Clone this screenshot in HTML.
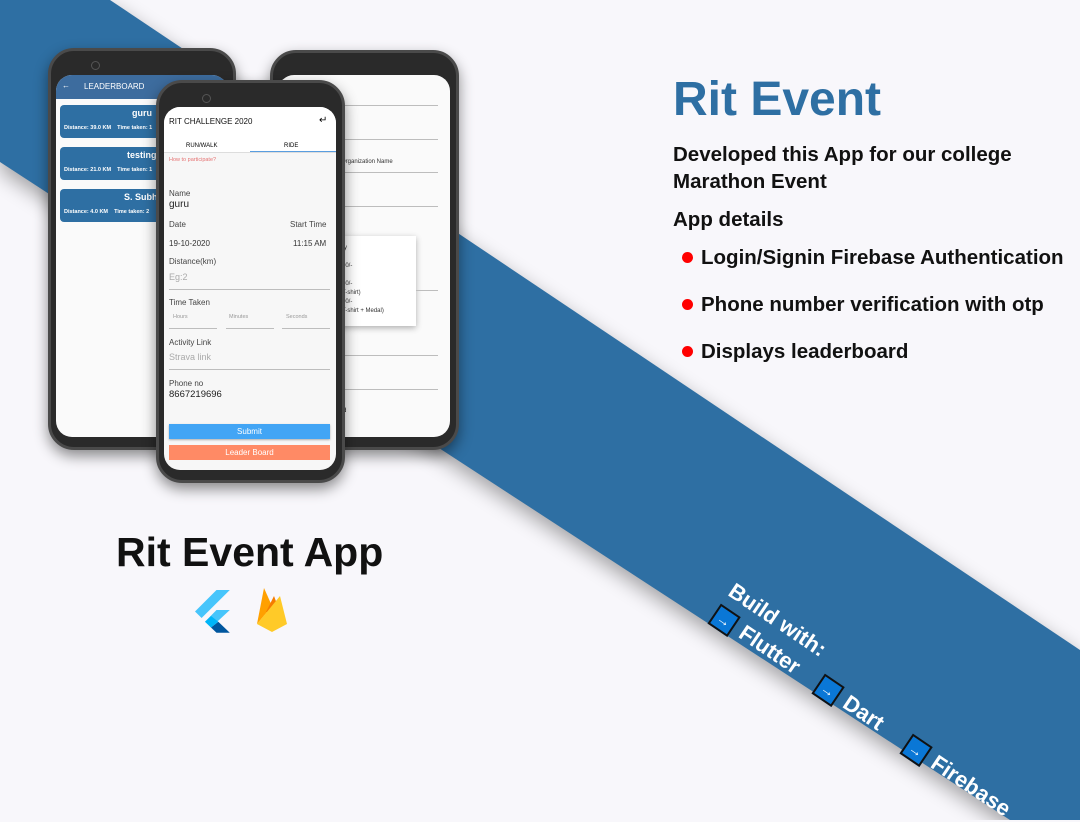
<!DOCTYPE html>
<html><head><meta charset="utf-8"><style>
*{margin:0;padding:0;box-sizing:border-box}
body{width:1080px;height:820px;overflow:hidden;background:#f8f7fb;font-family:"Liberation Sans",Arial,sans-serif;position:relative}
.a{position:absolute}
.phone{position:absolute;background:#2a2a2a;border-radius:26px;box-shadow:0 6px 14px rgba(0,0,0,.45);border:3px solid #4a4a4a}
.scr{position:absolute;background:#fafafa;border-radius:16px;overflow:hidden}
.t{position:absolute;white-space:nowrap}
.ln{position:absolute;height:1px;background:#bdbdbd}
.card{position:absolute;left:4px;width:175px;height:33px;background:#2e6fa3;border-radius:4px;color:#fff}
.b{font-weight:bold}
h1{position:absolute;left:673px;top:72px;font-size:48px;color:#2e6fa3;font-weight:bold}
.rt{position:absolute;font-size:20.5px;font-weight:bold;color:#111}
.dot{position:absolute;width:11px;height:11px;border-radius:50%;background:#f00}
.bw{position:absolute;color:#fff;font-weight:bold;font-size:22px;transform:rotate(34deg);transform-origin:left top;white-space:nowrap}
.bx{display:inline-block;width:24px;height:24px;background:#0a77d6;border:2px solid #111;vertical-align:middle;color:#fff;font-size:14px;text-align:center;line-height:20px;margin-right:8px}
</style></head><body>
<svg class="a" style="left:0;top:0" width="1080" height="820">
<defs><filter id="f" x="-10%" y="-10%" width="120%" height="120%"><feGaussianBlur stdDeviation="10"/></filter></defs>
<polygon points="0,0 110,0 1080,650 1080,820 1010,820 0,162" fill="#000" opacity=".35" filter="url(#f)" transform="translate(0,8)"/>
<polygon points="0,0 110,0 1080,650 1080,820 1010,820 0,162" fill="#2e6fa3"/>
</svg>

<!-- left phone -->
<div class="phone" style="left:48px;top:48px;width:188px;height:402px">
 <div class="a" style="left:40px;top:10px;width:9px;height:9px;border-radius:50%;border:1px solid #555"></div>
 <div class="scr" style="left:5px;top:24px;width:172px;height:362px">
  <div class="a" style="left:0;top:0;width:172px;height:24px;background:#3d6c9e;color:#fff;font-size:8px"><span class="t" style="left:6px;top:6px">←</span><span class="t" style="left:28px;top:7px">LEADERBOARD</span></div>
  <div class="card" style="top:30px"><span class="t b" style="left:72px;top:3px;font-size:9px">guru</span><span class="t b" style="left:4px;top:20px;font-size:5.5px">Distance: 39.0 KM &nbsp;&nbsp; Time taken: 1</span></div>
  <div class="card" style="top:72px"><span class="t b" style="left:67px;top:3px;font-size:9px">testing</span><span class="t b" style="left:4px;top:20px;font-size:5.5px">Distance: 21.0 KM &nbsp;&nbsp; Time taken: 1</span></div>
  <div class="card" style="top:114px"><span class="t b" style="left:64px;top:3px;font-size:9px">S. Subh</span><span class="t b" style="left:4px;top:20px;font-size:5.5px">Distance: 4.0 KM &nbsp;&nbsp; Time taken: 2</span></div>
 </div>
</div>
<!-- right phone -->
<div class="phone" style="left:270px;top:50px;width:189px;height:400px">
 <div class="scr" style="left:5px;top:22px;width:172px;height:362px">
  <div class="ln" style="left:40px;top:30px;width:120px"></div>
  <div class="ln" style="left:40px;top:64px;width:120px"></div>
  <span class="t" style="left:63px;top:84px;font-size:6px;color:#333">Organization Name</span>
  <div class="ln" style="left:40px;top:97px;width:120px"></div>
  <div class="ln" style="left:40px;top:131px;width:120px"></div>
  <div class="a" style="left:60px;top:161px;width:78px;height:90px;background:#fff;box-shadow:0 2px 6px rgba(0,0,0,.3);font-size:6px;color:#333;line-height:9px;padding:8px 4px 0 4px">ry<br><br>00/-<br><br>50/-<br>T-shirt)<br>00/-<br>T-shirt + Medal)</div>
  <div class="ln" style="left:138px;top:215px;width:22px"></div>
  <div class="ln" style="left:40px;top:280px;width:120px"></div>
  <div class="ln" style="left:40px;top:314px;width:120px"></div>
  <span class="t" style="left:63px;top:333px;font-size:6px">rd</span>
 </div>
</div>
<!-- center phone -->
<div class="phone" style="left:156px;top:80px;width:189px;height:403px">
 <div class="a" style="left:43px;top:11px;width:9px;height:9px;border-radius:50%;border:1px solid #555"></div>
 <div class="scr" style="left:5px;top:24px;width:172px;height:363px;background:#f7f7f7">
  <div class="a" style="left:0;top:0;width:172px;height:45px;background:#fff"></div>
  <span class="t" style="left:5px;top:10px;font-size:8px;color:#111">RIT CHALLENGE 2020</span>
  <span class="t" style="left:155px;top:8px;font-size:10px">↵</span>
  <span class="t" style="left:22px;top:36px;font-size:6px">RUN/WALK</span>
  <span class="t" style="left:120px;top:36px;font-size:6px">RIDE</span>
  <div class="a" style="left:0;top:45px;width:172px;height:1px;background:#ddd"></div>
  <div class="a" style="left:86px;top:44px;width:86px;height:1px;background:#5a9ee0"></div>
  <span class="t" style="left:5px;top:50px;font-size:5.5px;color:#e57373">How to participate?</span>
  <span class="t" style="left:5px;top:82px;font-size:8px;color:#444">Name</span>
  <span class="t" style="left:5px;top:92px;font-size:10px;color:#222">guru</span>
  <span class="t" style="left:5px;top:113px;font-size:8px;color:#444">Date</span>
  <span class="t" style="left:126px;top:113px;font-size:8px;color:#444">Start Time</span>
  <span class="t" style="left:5px;top:132px;font-size:8px;color:#333">19-10-2020</span>
  <span class="t" style="left:129px;top:132px;font-size:8px;color:#333">11:15 AM</span>
  <span class="t" style="left:5px;top:150px;font-size:8px;color:#444">Distance(km)</span>
  <span class="t" style="left:5px;top:165px;font-size:9px;color:#aaa">Eg:2</span>
  <div class="ln" style="left:5px;top:182px;width:161px"></div>
  <span class="t" style="left:5px;top:191px;font-size:8px;color:#444">Time Taken</span>
  <span class="t" style="left:9px;top:207px;font-size:5.5px;color:#999">Hours</span>
  <span class="t" style="left:65px;top:207px;font-size:5.5px;color:#999">Minutes</span>
  <span class="t" style="left:122px;top:207px;font-size:5.5px;color:#999">Seconds</span>
  <div class="ln" style="left:5px;top:221px;width:48px"></div>
  <div class="ln" style="left:62px;top:221px;width:48px"></div>
  <div class="ln" style="left:118px;top:221px;width:48px"></div>
  <span class="t" style="left:5px;top:231px;font-size:8px;color:#444">Activity Link</span>
  <span class="t" style="left:5px;top:245px;font-size:9px;color:#aaa">Strava link</span>
  <div class="ln" style="left:5px;top:262px;width:161px"></div>
  <span class="t" style="left:5px;top:272px;font-size:8px;color:#444">Phone no</span>
  <span class="t" style="left:5px;top:282px;font-size:9.5px;color:#222">8667219696</span>
  <div class="a" style="left:5px;top:317px;width:161px;height:15px;background:#42a5f5;color:#fff;font-size:8px;text-align:center;line-height:15px;box-shadow:0 1px 2px rgba(0,0,0,.3)">Submit</div>
  <div class="a" style="left:5px;top:338px;width:161px;height:15px;background:#ff8a65;color:#fff;font-size:8px;text-align:center;line-height:15px">Leader Board</div>
 </div>
</div>

<div class="a b" style="left:116px;top:529px;font-size:41px;color:#111">Rit Event App</div>
<svg class="a" style="left:195px;top:590px" width="36" height="44">
<polygon points="21.5,0 0,21.5 6.6,28 34.8,0" fill="#47c5fb"/>
<polygon points="21.5,20 10,31.7 16,37.5 34.8,20" fill="#47c5fb"/>
<polygon points="16,37.5 21.5,42.7 34.8,42.7 23.3,31.7" fill="#00569e"/>
<polygon points="10,31.7 16,26 23.3,31.7 16,37.5" fill="#00b5f8"/>
</svg>
<svg class="a" style="left:254px;top:586px" width="36" height="48">
<polygon points="3,38 10,2 18,20" fill="#ffa000"/>
<polygon points="12,26 20,10 26,26" fill="#f57c00"/>
<polygon points="3,38 26,10 33,38 18,46" fill="#ffca28"/>
</svg>

<h1>Rit Event</h1>
<div class="rt" style="left:673px;top:143px">Developed this App for our college</div>
<div class="rt" style="left:673px;top:170px">Marathon Event</div>
<div class="rt" style="left:673px;top:208px">App details</div>
<div class="dot" style="left:682px;top:252px"></div><div class="rt" style="left:701px;top:246px">Login/Signin Firebase Authentication</div>
<div class="dot" style="left:682px;top:299px"></div><div class="rt" style="left:701px;top:293px">Phone number verification with otp</div>
<div class="dot" style="left:682px;top:346px"></div><div class="rt" style="left:701px;top:340px">Displays leaderboard</div>

<div class="bw" style="left:738px;top:578px">Build with:</div>
<div class="bw" style="left:722px;top:602px"><span class="bx">→</span>Flutter</div>
<div class="bw" style="left:826px;top:672px"><span class="bx">→</span>Dart</div>
<div class="bw" style="left:914px;top:732px"><span class="bx">→</span>Firebase</div>
</body></html>
